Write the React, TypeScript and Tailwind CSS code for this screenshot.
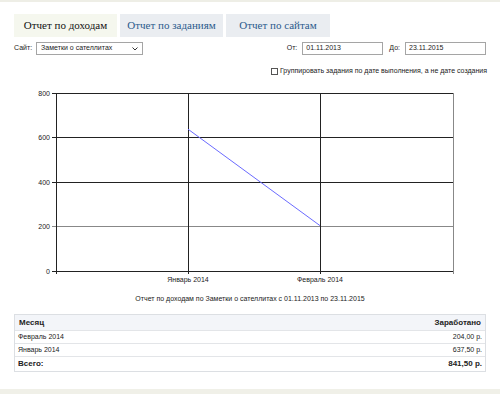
import React from "react";

const SANS = "'Liberation Sans', Arial, sans-serif";

function Chart() {
  const left = 56, right = 453, top = 93, bottom = 271;
  const ys = [800, 600, 400, 200, 0];
  const yFor = (v: number) => bottom - (v / 800) * (bottom - top);
  return (
    <svg width="500" height="200" viewBox="0 85 500 200" className="block">
      {ys.map((v) => (
        <g key={v}>
          <line x1={left - 4} x2={right} y1={yFor(v)} y2={yFor(v)} stroke={v === 200 ? "#888" : "#222"} strokeWidth="1" shapeRendering="crispEdges" />
          <text x={left - 6} y={yFor(v) + 2.5} textAnchor="end" fontSize="7" fontFamily={SANS} fill="#222">{v}</text>
        </g>
      ))}
      <line x1={left} x2={left} y1={top} y2={bottom + 3} stroke="#222" shapeRendering="crispEdges" />
      <line x1={right} x2={right} y1={top} y2={bottom + 3} stroke="#888" shapeRendering="crispEdges" />
      <line x1={188} x2={188} y1={top} y2={bottom + 3} stroke="#222" shapeRendering="crispEdges" />
      <line x1={320} x2={320} y1={top} y2={bottom + 3} stroke="#222" shapeRendering="crispEdges" />
      <line x1={188} y1={yFor(637.5)} x2={320} y2={yFor(204)} stroke="#6b6bff" strokeWidth="1" />
      <text x={188} y={282} textAnchor="middle" fontSize="7" fontFamily={SANS} fill="#222">Январь 2014</text>
      <text x={320} y={282} textAnchor="middle" fontSize="7" fontFamily={SANS} fill="#222">Февраль 2014</text>
    </svg>
  );
}

export default function App() {
  return (
    <div className="w-[500px] h-[394px] bg-white flex flex-col overflow-hidden" style={{ fontFamily: SANS }}>
      <div className="h-[2px] bg-[#eeeee6]" />
      <div className="flex-1 flex flex-col">
        <div className="flex gap-[3px] px-[14px] pt-[12px]">
          <div className="w-[103px] h-[23px] bg-[#f5f7ee] flex items-center justify-center text-[11px] text-[#111]" style={{ fontFamily: "'Liberation Serif', serif" }}>Отчет по доходам</div>
          <div className="w-[103px] h-[23px] bg-[#eaedf1] flex items-center justify-center text-[11px] text-[#2a5a8c]" style={{ fontFamily: "'Liberation Serif', serif" }}>Отчет по заданиям</div>
          <div className="w-[104px] h-[23px] bg-[#eaedf1] flex items-center justify-center text-[11px] text-[#2a5a8c]" style={{ fontFamily: "'Liberation Serif', serif" }}>Отчет по сайтам</div>
        </div>
        <div className="flex items-center justify-between px-[14px] mt-[5px] text-[7px] text-[#222]">
          <div className="flex items-center gap-[4px]">
            <span>Сайт:</span>
            <div className="w-[107px] h-[13px] border border-[#a5a5a5] flex items-center justify-between pl-[4px] pr-[4px]">
              <span>Заметки о сателлитах</span>
              <svg width="6" height="4" viewBox="0 0 6 4"><path d="M0.5 0.5 L3 3 L5.5 0.5" fill="none" stroke="#333" strokeWidth="1" /></svg>
            </div>
          </div>
          <div className="flex items-center">
            <span className="mr-[5px]">От:</span>
            <div className="w-[81px] h-[13px] border border-[#a5a5a5] flex items-center pl-[3px]">01.11.2013</div>
            <span className="ml-[6px] mr-[5px]">До:</span>
            <div className="w-[81px] h-[13px] border border-[#a5a5a5] flex items-center pl-[3px]">23.11.2015</div>
          </div>
        </div>
        <div className="flex justify-end items-center px-[13px] mt-[11px] text-[7px] text-[#222]">
          <div className="w-[7px] h-[7px] border border-[#555] bg-white mr-[2px]" />
          <span>Группировать задания по дате выполнения, а не дате создания</span>
        </div>
        <div className="mt-[8px]">
          <Chart />
        </div>
        <div className="text-center text-[7px] text-[#222] mt-[9px]">Отчет по доходам по Заметки о сателлитах с 01.11.2013 по 23.11.2015</div>
        <div className="mx-[14px] mt-[10px] border border-[#dcdfe3] text-[7px] text-[#222]">
          <div className="flex justify-between items-center h-[16px] bg-[#f3f5f9] px-[4px] font-bold text-[8px] border-b border-[#e3e5e8]">
            <span>Месяц</span>
            <span>Заработано</span>
          </div>
          <div className="flex justify-between items-center h-[13px] px-[3px] border-b border-[#e3e5e8]">
            <span>Февраль 2014</span>
            <span>204,00 р.</span>
          </div>
          <div className="flex justify-between items-center h-[13px] px-[3px] border-b border-[#e3e5e8]">
            <span>Январь 2014</span>
            <span>637,50 р.</span>
          </div>
          <div className="flex justify-between items-center h-[14px] px-[3px] font-bold text-[8px]">
            <span>Всего:</span>
            <span>841,50 р.</span>
          </div>
        </div>
      </div>
      <div className="h-[5px] bg-[#f0f0e8]" />
    </div>
  );
}
